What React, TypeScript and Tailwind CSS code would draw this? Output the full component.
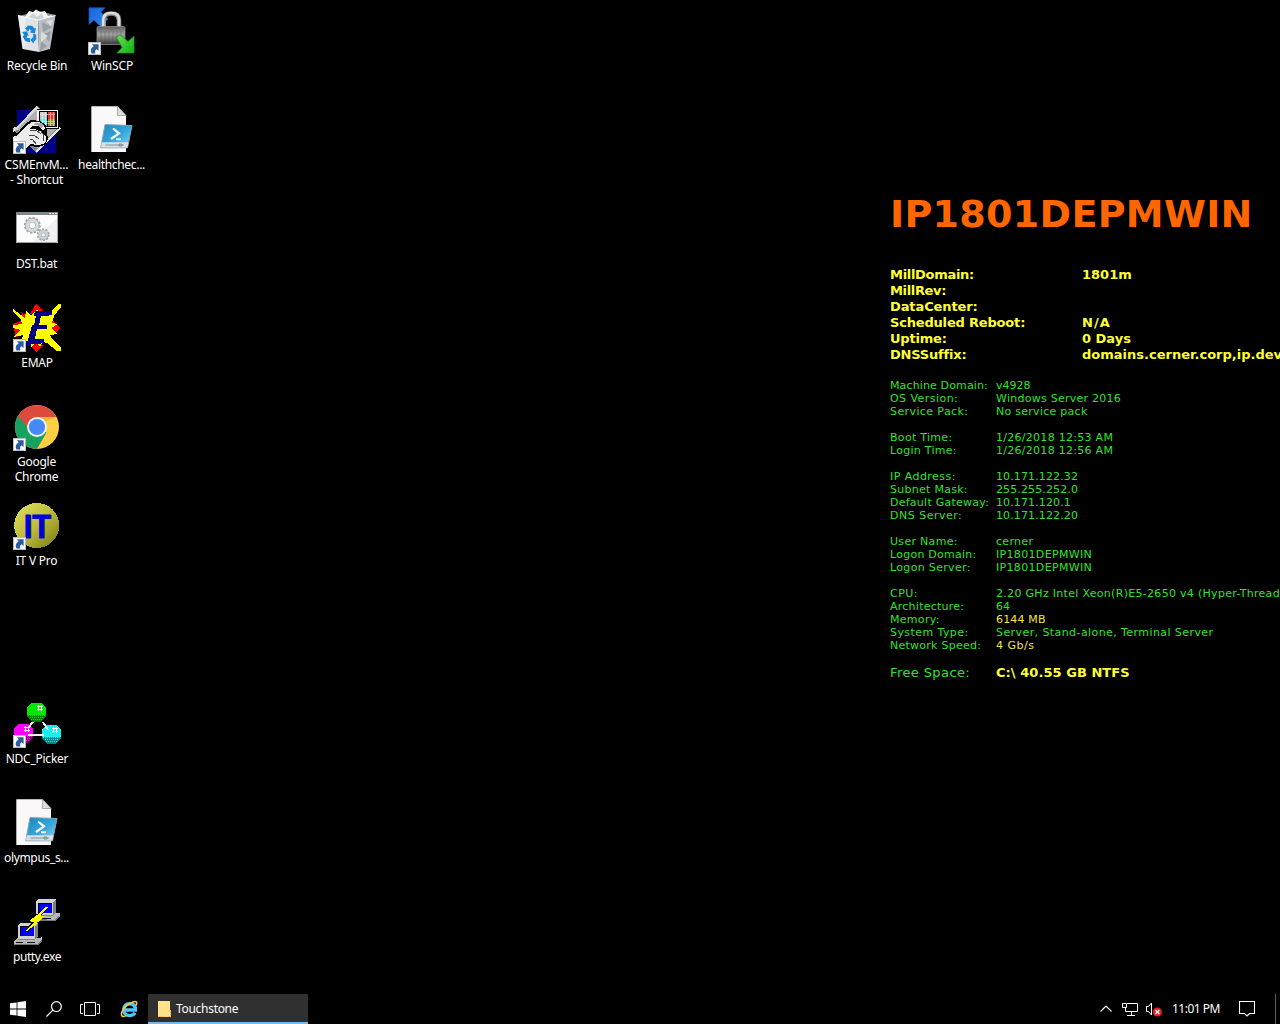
import React from "react";

type IconProps = { children: React.ReactNode; crisp?: boolean; shortcut?: boolean };

function Glyph({ children, crisp, shortcut }: IconProps) {
  return (
    <svg viewBox="0 0 48 48" className="h-12 w-12 shrink-0">
      <g shapeRendering={crisp ? "crispEdges" : "auto"}>{children}</g>
      {shortcut && (
        <g>
          <rect x="0" y="35" width="13" height="13" fill="#b9bcc0" />
          <rect x="1" y="36" width="11" height="11" fill="#fafafa" />
          <path d="M3.8 37.2H10.6V44L8.6 42.2C7.2 43 6.8 44.2 7.4 46.6H3.6C2 43.6 2.9 41 5.8 39.3Z" fill="#2c5c9e" />
        </g>
      )}
    </svg>
  );
}

function RecycleBin() {
  return (
    <Glyph>
      <path d="M5 9L14 7 25 4 42.5 8 40 12 24 14Z" fill="#8f969b" />
      <path d="M12 10L16 4 20 5 23 2.5 27 5 32 4 35 9 39 8 36 13 22 14Z" fill="#f2f4f5" />
      <path d="M16 10L20 6 24 10 29 6 31 12 22 13Z" fill="#cdd2d6" />
      <path d="M5 8.5L25 13 26 45 9.5 42Z" fill="#dfe3e6" />
      <path d="M25 13L42.5 8.5 37 42 26 45Z" fill="#b9bfc4" />
      <path d="M5 8.5L14 10.5 11 20 16 30 10 42Z" fill="#eef0f2" opacity=".8" />
      <path d="M29 15L39 20 30 25ZM31 27L38 24 36 35ZM28 34L34 39 27 44Z" fill="#989fa5" />
      <path d="M33 14L40 13 38 19ZM28 25L35 29 28 35Z" fill="#d9dde0" />
      <path d="M5 8.5L25 13.2 42.5 8.5" fill="none" stroke="#f6f8f9" strokeWidth="1" />
      <g fill="#1686d9">
        <path d="M12 21.5L15 18.5 19.5 19 21.3 21.5 23 21 21.8 26.5 16.5 25.2 18.3 24 16.6 22 15 24.8Z" />
        <path d="M9 25L14 24.3 15.8 29 14.3 28.5 13.8 30.8 17 31.3 17 35.3 12.5 34.2 9.8 30 11 27.5Z" />
        <path d="M19.8 27L23.2 27.5 23.3 32 20.8 35 20.8 36.8 17.3 33 20.8 29.2 20.8 31Z" />
      </g>
    </Glyph>
  );
}

function WinScp() {
  return (
    <Glyph shortcut>
      <defs>
        <linearGradient id="lockBody" x1="0" x2="0" y1="0" y2="1">
          <stop offset="0" stopColor="#5d5d5d" />
          <stop offset=".45" stopColor="#a2a2a2" />
          <stop offset="1" stopColor="#383838" />
        </linearGradient>
        <linearGradient id="arrowUp" x1="0" x2="1" y1="0" y2="1">
          <stop offset="0" stopColor="#1d62d8" />
          <stop offset="1" stopColor="#2b8cf6" />
        </linearGradient>
        <linearGradient id="arrowDown" x1="0" x2="1" y1="0" y2="1">
          <stop offset="0" stopColor="#6be058" />
          <stop offset="1" stopColor="#10b010" />
        </linearGradient>
      </defs>
      <path d="M1 .8H17L13 5 20 12 13 20 6 13 1 17.5Z" fill="url(#arrowUp)" stroke="#184fa5" strokeWidth=".8" />
      <path d="M15.7 21V13Q15.7 6.5 23.3 6.5T31 13V21" fill="none" stroke="#8b8b8b" strokeWidth="4.6" />
      <path d="M15.2 21V13Q15.2 6 23.3 6T31 13V21" fill="none" stroke="#dedede" strokeWidth="2.6" />
      <rect x="9" y="19.5" width="28" height="18" rx="1.5" fill="url(#lockBody)" stroke="#8d8d8d" strokeWidth=".8" />
      <path d="M13 24V36M17 24V36M21 24V36M25 24V36M29 24V36M33 24V36" stroke="#444" strokeWidth=".8" opacity=".4" />
      <path d="M28.5 30.5L32 27.8 40 34.5 46 29.3V46H29L34 40.5Z" fill="url(#arrowDown)" stroke="#189018" strokeWidth=".8" />
    </Glyph>
  );
}

function HandShortcut() {
  return (
    <Glyph crisp shortcut>
      <rect x="4" y="4" width="39" height="43" fill="#000084" />
      <path d="M24 0L48 22 24 47 0 24 6 20 18 7Z" fill="#848484" />
      <path d="M23 0L26 2 6 23 0 26 0 22 5 20Z" fill="#d6d6d6" />
      <path d="M23 45L46 21 48 22 24 47Z" fill="#e6e6e6" />
      <path d="M24 3L44 22 24 43 5 23Z" fill="#b0b0b0" />
      <rect x="24" y="3" width="22" height="20" fill="#000" />
      <rect x="24" y="4" width="21" height="18" fill="#f4f4f4" />
      <rect x="26" y="5" width="18" height="16" fill="#000" />
      <rect x="27" y="6" width="7" height="7" fill="#c8c8c8" />
      <rect x="35" y="6" width="7" height="7" fill="#e23232" />
      <rect x="27" y="13" width="7" height="7" fill="#58e6ed" />
      <rect x="35" y="13" width="7" height="7" fill="#97912c" />
      <path d="M29.5 6V20M32.5 6V20M37.5 6V20M40.5 6V20M27 8.5H42M27 15.5H42M27 17.5H42" stroke="#fff" strokeWidth="1" opacity=".5" />
      <path d="M0 30L4 28 11 19 18 14 27 15 33 19 34 27 35 33 32 39 25 41 17 40 10 47 0 44Z" fill="#000" />
      <path d="M0 31L5 29 12 21 19 16 26 16 31 19 32 23 30 24 25 20 19 20 17 23 22 23 29 26 33 31 33 35 30 38 25 39 17 38 12 44 0 44Z" fill="#ececec" />
      <path d="M22 17H28L31 20 28 22 24 19H20Z" fill="#a8a8a8" />
      <path d="M17 24L23 24 28 28M16 29L21 29 26 33M17 33L20 34 23 38M28 25L31 30 30 35" stroke="#444" strokeWidth="1" fill="none" />
      <path d="M0 34H4L9 40V46" stroke="#fff" strokeWidth="2" fill="none" />
    </Glyph>
  );
}

function PowerShellScript({ id }: { id: string }) {
  return (
    <Glyph>
      <defs>
        <linearGradient id={id} x1="0" x2="1" y1="0" y2="1">
          <stop offset="0" stopColor="#1c85bd" />
          <stop offset=".55" stopColor="#35a8dc" />
          <stop offset="1" stopColor="#9edcf4" />
        </linearGradient>
      </defs>
      <path d="M3.3 .3H29.5L38 9.5V46H3.3Z" fill="#faf8f9" />
      <path d="M29.5 .3V9.5H38Z" fill="#dedede" stroke="#9a9a9a" strokeWidth=".8" />
      <path d="M17 18.5L44 19.5 39.5 41.8H12.7Z" fill={`url(#${id})`} stroke="#8aa5b3" strokeWidth="1" />
      <path d="M13.8 36.2H40.4L39.4 41.4H13Z" fill="#d9e0e4" />
      <path d="M17.5 39H36M31 38H34V40H31Z" stroke="#7d878c" strokeWidth=".9" fill="none" />
      <path d="M25 22.5L31 27.3 23 33" fill="none" stroke="#fff" strokeWidth="2.2" />
      <path d="M28 33.3H33" stroke="#fff" strokeWidth="1.8" />
    </Glyph>
  );
}

function BatchFile() {
  return (
    <Glyph>
      <path d="M3 7H45V38H3Z" fill="#fcfcfd" />
      <path d="M45 12V38H19Z" fill="#f0f0f2" />
      <path d="M3.5 7.5H44.5V37.5H3.5Z" fill="none" stroke="#9ea4a6" />
      <path d="M3 7H45V10H3Z" fill="#7e8789" />
      <path d="M36 8H38V9H36ZM39 8H41V9H39ZM42 8H44V9H42Z" fill="#e8eaeb" />
      <circle cx="19.3" cy="20.3" r="7.4" fill="none" stroke="#9aa1a5" strokeWidth="2" strokeDasharray="2.2 1.67" />
      <circle cx="19.3" cy="20.3" r="5" fill="none" stroke="#a4abae" strokeWidth="4.4" />
      <circle cx="19.3" cy="20.3" r="5" fill="none" stroke="#d4dade" strokeWidth="3.2" />
      <circle cx="30.3" cy="29.7" r="5.6" fill="none" stroke="#9aa1a5" strokeWidth="1.6" strokeDasharray="2 1.5" />
      <circle cx="30.3" cy="29.7" r="3.5" fill="none" stroke="#a4abae" strokeWidth="3.6" />
      <circle cx="30.3" cy="29.7" r="3.5" fill="none" stroke="#cbd1d4" strokeWidth="2.6" />
    </Glyph>
  );
}

function Emap() {
  return (
    <Glyph crisp shortcut>
      <path d="M23 0L30 6 26 12 17 10ZM48 24L40 17 32 24 40 31ZM23 48L30 42 24 36 17 42ZM0 20L10 16 12 30 3 33ZM8 8L14 12 12 18ZM38 8L32 18 40 14ZM34 32L42 40 32 38Z" fill="#f00" />
      <path d="M0 5L12 14 13 7 18 11 24 5 28 10 36 9 45 0H48V3L41 12 39 19 45 20 38 24 45 30 37 31 40 36 48 44V47H44L34 39 30 38 27 43 23 39 18 43 14 37 8 38 10 31 0 33 8 26 0 24V21L9 20 8 16 0 8Z" fill="#ff0" />
      <path d="M22 7H39V11H36V12H28L26 21H34V25H24L22 35H31V39H28V40H18V42H13V38L15 36 19 21H21L23 12H21Z" fill="#000084" />
    </Glyph>
  );
}

function Chrome() {
  return (
    <Glyph shortcut>
      <circle cx="24" cy="24" r="22" fill="#fdd043" />
      <path d="M24 24L4.9 13A22 22 0 0 0 24 46L33.5 29.5Z" fill="#1ba15f" />
      <path d="M24 24H14.5L4.9 13A22 22 0 0 1 43.2 14H24Z" fill="#dc4a3e" />
      <path d="M24 14H43.2L33 18Z" fill="#b98b28" opacity=".35" />
      <circle cx="24" cy="24" r="10" fill="#f4f4f4" />
      <circle cx="24" cy="24" r="8.1" fill="#4688f4" />
    </Glyph>
  );
}

function ItvPro() {
  return (
    <Glyph crisp shortcut>
      <defs>
        <linearGradient id="coin" x1="0" x2="1" y1="0" y2="1">
          <stop offset="0" stopColor="#e0e05c" />
          <stop offset=".5" stopColor="#bcbc38" />
          <stop offset="1" stopColor="#77771c" />
        </linearGradient>
      </defs>
      <circle cx="23.7" cy="23.5" r="22.5" fill="url(#coin)" />
      <text x="11.7" y="36" textLength="27" lengthAdjust="spacingAndGlyphs" fontFamily="Liberation Sans" fontWeight="700" fontSize="33" fill="#55551a">IT</text>
      <text x="10.7" y="35.5" textLength="27" lengthAdjust="spacingAndGlyphs" fontFamily="Liberation Sans" fontWeight="700" fontSize="33" fill="#0000d8" stroke="#0000d8" strokeWidth=".8">IT</text>
    </Glyph>
  );
}

function Ball({ x, y, light, dark }: { x: number; y: number; light: string; dark: string }) {
  return (
    <g>
      <path d={`M${x - 5} ${y - 9}H${x + 5}L${x + 10} ${y - 4}V${y + 4}L${x + 5} ${y + 10}H${x - 4}L${x - 9} ${y + 4}V${y - 4}Z`} fill={light} />
      <path d={`M${x - 9} ${y + 3}H${x + 10}V${y + 4}L${x + 5} ${y + 10}H${x - 4}L${x - 9} ${y + 4}Z`} fill={dark} />
      <path d={`M${x - 8} ${y + 3.5}H${x + 9}M${x - 6} ${y + 5.5}H${x + 8}M${x - 5} ${y + 7.5}H${x + 6}`} stroke={light} strokeDasharray="1 1" />
      <path d={`M${x + 1} ${y - 5.5}H${x + 7}M${x + 1} ${y - 2.5}H${x + 7}M${x + 2.5} ${y - 7}V${y - 1}M${x + 5.5} ${y - 7}V${y - 1}`} stroke="#fff" />
    </g>
  );
}

function NdcPicker() {
  return (
    <Glyph crisp shortcut>
      <Ball x={23} y={12} light="#00e800" dark="#007c00" />
      <Ball x={10} y={33} light="#f0f" dark="#840084" />
      <Ball x={38} y={34} light="#18eef0" dark="#008484" />
      <path d="M20 22L15 28M30 22L35 30M15 35H31" stroke="#f0f0f0" strokeWidth="2" fill="none" />
    </Glyph>
  );
}

function Putty() {
  return (
    <Glyph crisp>
      <path d="M22 17H28L44 15 47 15V18L42 23H26L22 21Z" fill="#b8b8b8" />
      <path d="M41 22L46 17V20L42 23H26V21Z" fill="#777" />
      <path d="M23 3L26 1H43V14L39 18H23Z" fill="#7f7f7f" />
      <path d="M23 3L26 1H43L40 4V17H23Z" fill="#d2d2d2" />
      <rect x="25" y="5" width="14" height="10" fill="#0000f4" />
      <path d="M25 15V5H39" stroke="#000" fill="none" />
      <path d="M1 43L5 40H26L29 39V42L24 47H1Z" fill="#b8b8b8" />
      <path d="M1 46H24L29 41V43L25 47H1Z" fill="#777" />
      <path d="M3 44H10M14 44H22M28 20H38" stroke="#111" />
      <path d="M5 27L8 25H25V38L21 42H5Z" fill="#7f7f7f" />
      <path d="M5 27L8 25H25L22 28V41H5Z" fill="#d2d2d2" />
      <rect x="7" y="28" width="14" height="10" fill="#0000f4" />
      <path d="M7 38V28H21" stroke="#000" fill="none" />
      <path d="M35 8L28 18 31 18 24 25 14 34 13 32 19 24 16 23 24 16Z" fill="#000" />
      <path d="M33.5 8.5L35 9.5 27.5 17.5H31.5L25.5 23.5 14 33.5 13 32 20.5 24.5 16 23 24.5 16.5Z" fill="#ff0" />
    </Glyph>
  );
}

type Item = { icon: React.ReactNode; lines: [string, string][] } | null;

const columns: Item[][] = [
  [
    { icon: <RecycleBin />, lines: [["Recycle Bin", "tracking-[-0.25px]"]] },
    { icon: <HandShortcut />, lines: [["CSMEnvM...", "tracking-[-0.2px] -ml-px"], ["- Shortcut", "tracking-[-0.2px] -ml-px"]] },
    { icon: <BatchFile />, lines: [["DST.bat", "tracking-[-0.25px] -ml-px"]] },
    { icon: <Emap />, lines: [["EMAP", "tracking-[-0.25px]"]] },
    { icon: <Chrome />, lines: [["Google", "tracking-[-0.25px] -ml-px"], ["Chrome", "tracking-[-0.25px] -ml-px"]] },
    { icon: <ItvPro />, lines: [["IT V Pro", "tracking-[-0.25px] -ml-px"]] },
    null,
    { icon: <NdcPicker />, lines: [["NDC_Picker", "tracking-[-0.25px]"]] },
    { icon: <PowerShellScript id="ps1" />, lines: [["olympus_s...", "tracking-[-0.33px] -ml-px"]] },
    { icon: <Putty />, lines: [["putty.exe", "tracking-[-0.4px]"]] },
  ],
  [
    { icon: <WinScp />, lines: [["WinSCP", "tracking-[-0.15px]"]] },
    { icon: <PowerShellScript id="ps2" />, lines: [["healthchec...", "tracking-[-0.33px] -ml-px"]] },
  ],
];

const summary: [string, string, string, string?][] = [
  ["MillDomain:", "1801m", "tracking-[-0.3px]"],
  ["MillRev:", "", "tracking-[-0.35px]"],
  ["DataCenter:", "", "tracking-[-0.1px]"],
  ["Scheduled Reboot:", "N/A", "tracking-[-0.18px]", "tracking-[1px]"],
  ["Uptime:", "0 Days", "tracking-[-0.2px]"],
  ["DNSSuffix:", "domains.cerner.corp,ip.dev", "tracking-[-0.2px]"],
];

type Row = { label: string; value: string; ls: string; vs: string; hot?: boolean };

const groups: Row[][] = [
  [
    { label: "Machine Domain:", value: "v4928", ls: "tracking-[0.13px]", vs: "" },
    { label: "OS Version:", value: "Windows Server 2016", ls: "tracking-[0.45px]", vs: "tracking-[0.26px]" },
    { label: "Service Pack:", value: "No service pack", ls: "tracking-[0.4px]", vs: "tracking-[0.27px]" },
  ],
  [
    { label: "Boot Time:", value: "1/26/2018 12:53 AM", ls: "tracking-[0.3px]", vs: "tracking-[0.28px]" },
    { label: "Login Time:", value: "1/26/2018 12:56 AM", ls: "tracking-[0.27px]", vs: "tracking-[0.28px]" },
  ],
  [
    { label: "IP Address:", value: "10.171.122.32", ls: "tracking-[0.45px]", vs: "tracking-[0.12px]" },
    { label: "Subnet Mask:", value: "255.255.252.0", ls: "tracking-[0.27px]", vs: "tracking-[0.12px]" },
    { label: "Default Gateway:", value: "10.171.120.1", ls: "tracking-[0.25px]", vs: "tracking-[0.12px]" },
    { label: "DNS Server:", value: "10.171.122.20", ls: "tracking-[0.5px]", vs: "tracking-[0.12px]" },
  ],
  [
    { label: "User Name:", value: "cerner", ls: "tracking-[0.3px]", vs: "tracking-[0.3px]" },
    { label: "Logon Domain:", value: "IP1801DEPMWIN", ls: "tracking-[0.25px]", vs: "tracking-[0.33px]" },
    { label: "Logon Server:", value: "IP1801DEPMWIN", ls: "tracking-[0.33px]", vs: "tracking-[0.33px]" },
  ],
  [
    { label: "CPU:", value: "2.20 GHz Intel Xeon(R)E5-2650 v4 (Hyper-Thread", ls: "tracking-[0.5px]", vs: "tracking-[0.3px]" },
    { label: "Architecture:", value: "64", ls: "tracking-[0.25px]", vs: "" },
    { label: "Memory:", value: "6144 MB", ls: "tracking-[0.3px]", vs: "tracking-[0.15px]", hot: true },
    { label: "System Type:", value: "Server, Stand-alone, Terminal Server", ls: "tracking-[0.42px]", vs: "tracking-[0.42px]" },
    { label: "Network Speed:", value: "4 Gb/s", ls: "tracking-[0.25px]", vs: "tracking-[0.5px]", hot: true },
  ],
];

function SystemInfo() {
  return (
    <section className="w-[390px] shrink-0 overflow-hidden whitespace-nowrap pt-[192px] font-['Verdana','DejaVu_Sans',sans-serif] text-[#33e033]">
      <h1 className="h-[75px] text-[38px] leading-[44px] font-bold tracking-[0.3px] text-[#ff6600]">IP1801DEPMWIN</h1>
      <dl className="mb-4 text-[13px] leading-4 font-bold text-[#ffff33]">
        {summary.map(([k, v, ls, vs]) => (
          <div key={k} className="flex h-4">
            <dt className={`w-48 shrink-0 ${ls}`}>{k}</dt>
            <dd className={vs}>{v}</dd>
          </div>
        ))}
      </dl>
      <div className="flex flex-col gap-[13px] text-[11px] leading-[13px]">
        {groups.map((g, i) => (
          <dl key={i}>
            {g.map((r) => (
              <div key={r.label} className="flex h-[13px]">
                <dt className={`w-[106px] shrink-0 ${r.ls}`}>{r.label}</dt>
                <dd className={`${r.vs} ${r.hot ? "text-[#f5e14a]" : ""}`}>{r.value}</dd>
              </div>
            ))}
          </dl>
        ))}
        <div className="flex text-[13px] leading-4">
          <span className="w-[106px] shrink-0 tracking-[0.4px]">Free Space:</span>
          <span className="font-bold tracking-[0.05px] text-[#ffff33]">C:\ 40.55 GB NTFS</span>
        </div>
      </div>
    </section>
  );
}

function Taskbar() {
  return (
    <footer className="flex h-[30px] shrink-0 items-center bg-black text-[12px] text-white">
      <div className="flex w-9 justify-center">
        <svg className="h-4 w-4" viewBox="0 0 16 16" fill="#fff">
          <path d="M0 2.3L6.6 1.4V7.6H0ZM7.4 1.3L16 0V7.6H7.4ZM0 8.4H6.6V14.6L0 13.7ZM7.4 8.4H16V16L7.4 14.7Z" />
        </svg>
      </div>
      <div className="flex w-9 justify-center">
        <svg className="h-4 w-4" viewBox="0 0 16 16" fill="none" stroke="#fff" strokeWidth="1.2">
          <circle cx="10.4" cy="5.6" r="4.9" />
          <path d="M6.8 9.2L.5 15.5" />
        </svg>
      </div>
      <div className="flex w-9 justify-center">
        <svg className="h-4 w-5" viewBox="0 0 20 16" fill="none" stroke="#fff">
          <path d="M4.5 1.5H15.5V14.5H4.5ZM3 3.5H.5V12.5H3M17 3.5H19.5V12.5H17" />
        </svg>
      </div>
      <div className="flex w-10 justify-center pl-px">
        <svg className="h-[18px] w-[18px]" viewBox="0 0 18 18">
          <path d="M4.5 10H15.4Q15.6 4 10 3.8 4 4 3.8 10 4 15.6 10 15.6 13.6 15.4 15 12.8" fill="none" stroke="#55c1f4" strokeWidth="3.4" />
          <path d="M16.2 5.5Q18 .3 13 2 4 5 1.6 13 .8 18.3 6 15.6" fill="none" stroke="#f9cb37" strokeWidth="1.6" />
        </svg>
      </div>
      <div className="flex h-full w-40 items-center border-b-2 border-[#76b9ed] bg-[#303030] pt-0.5 pl-2.5">
        <svg className="mr-[5px] h-4 w-[13px]" viewBox="0 0 13 16">
          <path d="M0 0H12V9H13V16H0Z" fill="#ffe28a" />
          <path d="M0 15L10 16V10L12 9H13V16H0Z" fill="#f0c24b" />
          <path d="M10.5 10.5H12V15H10.5Z" fill="#fff0b8" />
        </svg>
        <span className="leading-4 tracking-[-0.3px]">Touchstone</span>
      </div>
      <div className="grow" />
      <svg className="mr-2.5 h-3 w-3" viewBox="0 0 12 12" fill="none" stroke="#fff" strokeWidth="1.2">
        <path d="M.5 8.5L6 3 11.5 8.5" />
      </svg>
      <svg className="mr-2 h-4 w-4" viewBox="0 0 16 16" fill="none" stroke="#fff">
        <path d="M5 2.5H15.5V10.5H3.5V7M.5 2.5H4.5V6.5H.5ZM9.5 10.5V14M5 14.5H13" />
      </svg>
      <svg className="mr-2.5 h-4 w-4" viewBox="0 0 16 16" fill="none">
        <path d="M.5 5.5H2.5L5.5 2V14L2.5 10.5H.5Z" stroke="#fff" />
        <circle cx="11.4" cy="11" r="4.6" fill="#e0202a" />
        <path d="M9.4 9L13.4 13M13.4 9L9.4 13" stroke="#fff" strokeWidth="1.2" />
      </svg>
      <span className="w-[49px] whitespace-nowrap tracking-[-0.5px]">11:01 PM</span>
      <svg className="ml-[18px] h-4 w-4" viewBox="0 0 16 16" fill="none" stroke="#fff" strokeWidth="1.1">
        <path d="M.5 .5H15.5V12.5H10.5L8 15 5.5 12.5H.5Z" />
      </svg>
      <div className="ml-5 h-full w-[5px] border-l border-[#606060]" />
    </footer>
  );
}

export default function App() {
  return (
    <div className="flex h-[1024px] w-[1280px] flex-col overflow-hidden bg-black font-['Segoe_UI','Noto_Sans',sans-serif]">
      <main className="flex h-[994px] justify-between">
        <div className="flex gap-px">
          {columns.map((col, i) => (
            <div key={i} className="flex w-[74px] flex-col">
              {col.map((item, j) => (
                <div key={j} className="flex h-[99px] flex-col items-center pt-[7px] text-[12px] leading-[15px] text-white">
                  {item && item.icon}
                  <div className="mt-[3px] flex flex-col items-center whitespace-nowrap">
                    {item && item.lines.map(([text, spacing]) => (
                      <span key={text} className={spacing}>{text}</span>
                    ))}
                  </div>
                </div>
              ))}
            </div>
          ))}
        </div>
        <SystemInfo />
      </main>
      <Taskbar />
    </div>
  );
}
